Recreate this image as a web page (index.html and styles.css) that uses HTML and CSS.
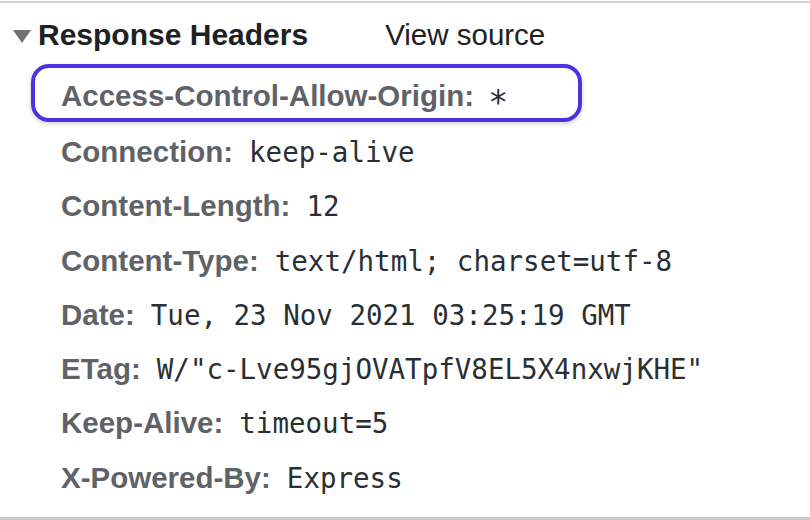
FILE: index.html
```html
<!DOCTYPE html>
<html lang="en">
<head>
    <meta charset="UTF-8">
    <meta name="viewport" content="width=device-width, initial-scale=1.0">
    <title>Response Headers</title>
    <link rel="stylesheet" href="styles.css">
</head>

<body>
<div class="panel">
    <div class="section-header">
        <span class="arrow"></span>
        <span class="section-title">Response Headers</span>
        <span class="view-source">View source</span>
    </div>
    <div class="headers">
        <div class="row highlight">
            <span class="name">Access-Control-Allow-Origin:</span><span class="value"><span class="star">*</span></span>
        </div>
        <div class="row">
            <span class="name">Connection:</span><span class="value">keep-alive</span>
        </div>
        <div class="row">
            <span class="name">Content-Length:</span><span class="value">12</span>
        </div>
        <div class="row">
            <span class="name">Content-Type:</span><span class="value">text/html; charset=utf-8</span>
        </div>
        <div class="row">
            <span class="name">Date:</span><span class="value">Tue, 23 Nov 2021 03:25:19 GMT</span>
        </div>
        <div class="row">
            <span class="name">ETag:</span><span class="value">W/"c-Lve95gjOVATpfV8EL5X4nxwjKHE"</span>
        </div>
        <div class="row">
            <span class="name">Keep-Alive:</span><span class="value">timeout=5</span>
        </div>
        <div class="row">
            <span class="name">X-Powered-By:</span><span class="value">Express</span>
        </div>
    </div>
</div>
</body>
</html>
```

FILE: styles.css
```css
body {
    margin: 0;
    padding: 0;
    background-color: #fff;
    font-family: 'Liberation Sans', Arial, sans-serif;
}

.panel {
    margin-top: 1px;
    height: 519px;
    box-sizing: border-box;
    border-top: 2px solid #cfcfcf;
    border-bottom: 3px solid #c9c9c9;
    overflow: hidden;
}

.section-header {
    display: flex;
    align-items: center;
    padding: 12px 0 0 13px;
    height: 40px;
    line-height: 40px;
}

.arrow {
    width: 0;
    height: 0;
    margin-top: 3px;
    border-left: 9px solid transparent;
    border-right: 9px solid transparent;
    border-top: 13px solid #717171;
}

.section-title {
    margin-left: 7px;
    font-size: 30px;
    font-weight: bold;
    color: #202124;
}

.view-source {
    margin-left: 77px;
    font-size: 29.5px;
    color: #202124;
}

.headers {
    padding-left: 61px;
    margin-top: 9px;
}

.row {
    font-size: 29.5px;
    line-height: 40px;
    padding: 7px 0 7.3px;
    white-space: nowrap;
}

.row.highlight {
    width: 551px;
    box-sizing: border-box;
    margin: 0 0 3px -30px;
    padding: 7.75px 0 2.25px 26px;
    border: 4px solid #4b32e3;
    border-radius: 18px;
    box-shadow: 0 2px 5px rgba(0, 0, 0, 0.18);
}

.name {
    font-weight: bold;
    color: #5f6368;
}

.value {
    margin-left: 16px;
    font-family: 'DejaVu Sans Mono', 'Liberation Mono', monospace;
    font-size: 27.5px;
    line-height: 30px;
    color: #2b2f33;
}

.star {
    display: inline-block;
    transform: translateY(6px) scale(1.2);
}
```
